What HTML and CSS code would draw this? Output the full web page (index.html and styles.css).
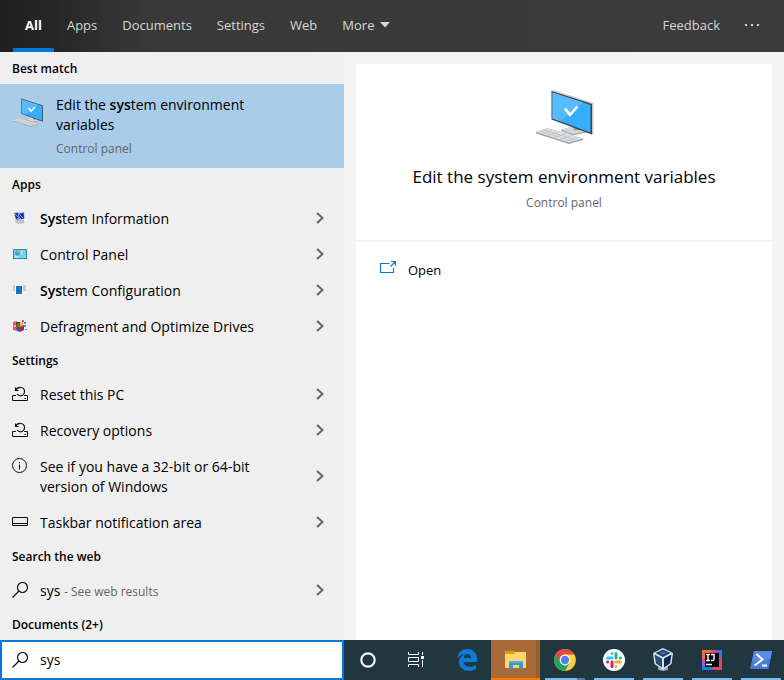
FILE: index.html
```html
<!DOCTYPE html>
<html lang="en">
<head>
<meta charset="utf-8">
<title>Search</title>
<link rel="stylesheet" href="styles.css">
</head>
<body>
<svg class="defs" aria-hidden="true">
  <symbol id="computer" viewBox="0 0 60 56">
    <path d="M27 39.500 41 36 55 40.500V42L39 45.500 27 41Z" fill="#a9aeb1"/>
    <path d="M27 39.500 41 36 55 40.500 39 44Z" fill="#d5d8da"/>
    <path d="M38 33 47 36V40L40 40.500Z" fill="#9a9fa3"/>
    <path d="M17 1 19 0 59.500 13V44L58 45Z" fill="#c3c7ca"/>
    <path d="M17.500 1 58 14V44.500L17.500 29.500Z" fill="#3d454b"/>
    <path d="M18.500 2.500 56.500 15V42.500L18.500 28.500Z" fill="#35aefb"/>
    <path d="M18.500 2.500 49 12.500 26 31 18.500 28.500Z" fill="#58bcfc"/>
    <path d="M31 18.500 36 25 43.500 16.500" fill="none" stroke="#fff" stroke-width="2.600"/>
    <path d="M2 42 13 38 49 48.500V50L35 54 2 43.500Z" fill="#9fa3a7"/>
    <path d="M2 42 13 38 49 48.500 35 52.500Z" fill="#dedfe1"/>
    <path d="M6 41 39 51.500M9.500 39.800 43 50.300M8 43.500 18 40M14 45.500 25 42M20 47.500 31 44M26 49.500 37 46M32 51.500 43 47.500" stroke="#b9bcbf" stroke-width=".7" fill="none"/>
  </symbol>
  <symbol id="chevron" viewBox="0 0 8 12"><path d="M1 1 6.500 6 1 11" fill="none" stroke="#666" stroke-width="2"/></symbol>
  <symbol id="recovery" viewBox="0 0 16 16">
    <path d="M4 9.500H.5V14.500H15.500V9.500H12M12.500 12.500H14" fill="none" stroke="#111"/>
    <path d="M3.500 1.500V4.500H6.500M3.500 4.500C5.500 .3 12.500 .3 12.500 5.500 12.500 8 10.500 9.800 8.500 9.800 7 9.800 6 9.300 5 8.200" fill="none" stroke="#111" stroke-width="1.200"/>
  </symbol>
  <symbol id="search" viewBox="0 0 16 16"><circle cx="10.500" cy="5.500" r="5" fill="none" stroke="#111" stroke-width="1.200"/><path d="M7 9 .5 15.500" stroke="#111" stroke-width="1.200"/></symbol>
</svg>

<header class="topbar">
  <nav class="tabs" aria-label="Search scope">
    <button class="tab tab-active">All</button>
    <button class="tab">Apps</button>
    <button class="tab">Documents</button>
    <button class="tab">Settings</button>
    <button class="tab">Web</button>
    <button class="tab tab-more">More <svg width="10" height="6" viewBox="0 0 10 6"><path d="M0 0H10L5 5.500Z" fill="#d6d6d6"/></svg></button>
  </nav>
  <button class="tab">Feedback</button>
  <button class="tab dots" aria-label="Options"><svg width="16" height="4" viewBox="0 0 16 4"><path d="M1 1H3V3H1ZM7 1H9V3H7ZM13 1H15V3H13Z" fill="#d6d6d6"/></svg></button>
</header>

<main class="content">
  <section class="results">
    <h2 class="group">Best match</h2>
    <a class="best" href="#">
      <svg class="best-icon"><use href="#computer"/></svg>
      <span class="best-text">
        <span class="best-title">Edit the <b>sys</b>tem environment variables</span>
        <span class="sub">Control panel</span>
      </span>
    </a>

    <h2 class="group">Apps</h2>
    <a class="row" href="#">
      <svg class="icon" viewBox="0 0 16 16"><path d="M4 9 12 10V12L13 13 6 14 3 12Z" fill="#bfc3c6"/><path d="M2 3 5 2 7 3 12 2 12.500 9 4 10Z" fill="#8d98ce"/><path d="M2.500 3.500 6 3 6.500 8 4 9ZM7 4 11.500 3 12 8.500 7.500 9Z" fill="#1028ad"/><path d="M3 4 9 9M7 4 11 8" stroke="#94a9f2" fill="none"/></svg>
      <span class="label"><b>Sys</b>tem Information</span><svg class="chevron"><use href="#chevron"/></svg>
    </a>
    <a class="row" href="#">
      <svg class="icon" viewBox="0 0 16 16"><path d="M1 3H15V13H1Z" fill="#258fbd"/><path d="M2 4H14V12H2Z" fill="#79d4fa"/><circle cx="5.500" cy="7" r="2.500" fill="#39a4e2"/><path d="M5.500 4.500A2.500 2.500 0 0 1 8 7H5.500Z" fill="#f1a23c"/><path d="M9 6H11M9 8H10M3 11H7" stroke="#d6f4ff"/><path d="M12 5V7M9 10H12" stroke="#e7a653"/></svg>
      <span class="label">Control Panel</span><svg class="chevron"><use href="#chevron"/></svg>
    </a>
    <a class="row" href="#">
      <svg class="icon" viewBox="0 0 16 16"><path d="M1 3H15V13H1Z" fill="#f4f4f4"/><path d="M1 3H3V9H1ZM11 3H14V9H11Z" fill="#c9cacb"/><path d="M3 3H11V13H3Z" fill="#fff"/><path d="M4 4H10V12H4Z" fill="#0878d3"/></svg>
      <span class="label"><b>Sys</b>tem Configuration</span><svg class="chevron"><use href="#chevron"/></svg>
    </a>
    <a class="row" href="#">
      <svg class="icon" viewBox="0 0 16 16"><path d="M1 4 5 3 6 13 1 12Z" fill="#e95c61"/><path d="M4 4H8V9H4Z" fill="#863a34"/><path d="M5 6 8 5V10L5 11Z" fill="#19a147"/><path d="M8 4H11V9H8Z" fill="#e3b938"/><path d="M4 10 8 9V14L5 13Z" fill="#3358bd"/><path d="M8 9 12 7V12L8 14Z" fill="#b82046"/><path d="M10 2H12V4H10ZM12 4H14V6H12Z" fill="#cc47e6"/><path d="M12 7H14V9H12ZM13 11H15V12H13Z" fill="#35a3d2"/><path d="M2 7H4V9H2Z" fill="#f7abad"/></svg>
      <span class="label">Defragment and Optimize Drives</span><svg class="chevron"><use href="#chevron"/></svg>
    </a>

    <h2 class="group">Settings</h2>
    <a class="row" href="#"><svg class="icon"><use href="#recovery"/></svg><span class="label">Reset this PC</span><svg class="chevron"><use href="#chevron"/></svg></a>
    <a class="row" href="#"><svg class="icon"><use href="#recovery"/></svg><span class="label">Recovery options</span><svg class="chevron"><use href="#chevron"/></svg></a>
    <a class="row" href="#">
      <svg class="icon" viewBox="0 0 16 16"><circle cx="7.500" cy="7.500" r="7" fill="none" stroke="#111"/><path d="M7.500 6.500V11.500M7.500 4V5.200" stroke="#111"/></svg>
      <span class="label">See if you have a 32-bit or 64-bit version of Windows</span><svg class="chevron"><use href="#chevron"/></svg>
    </a>
    <a class="row" href="#">
      <svg class="icon" viewBox="0 0 16 16"><path d="M.5 3.500H15.500V11.500H.5ZM.5 9.500H15.500" fill="none" stroke="#111"/></svg>
      <span class="label">Taskbar notification area</span><svg class="chevron"><use href="#chevron"/></svg>
    </a>

    <h2 class="group">Search the web</h2>
    <a class="row" href="#"><svg class="icon"><use href="#search"/></svg><span class="label">sys <span class="sub">- See web results</span></span><svg class="chevron"><use href="#chevron"/></svg></a>

    <h2 class="group">Documents (2+)</h2>
  </section>

  <section class="preview">
    <div class="card">
      <div class="hero">
        <svg class="hero-icon"><use href="#computer"/></svg>
        <h1 class="hero-title">Edit the system environment variables</h1>
        <p class="sub">Control panel</p>
      </div>
      <a class="action" href="#">
        <svg class="icon" viewBox="0 0 16 16"><path d="M9.500 3.500H.5V12.500H13.500V8M11 1.500H15.500V6M15.500 1.500 10.500 6.500" fill="none" stroke="#0078d7" stroke-width="1.200"/></svg>
        Open
      </a>
    </div>
  </section>
</main>

<footer class="bottom">
  <label class="searchbox">
    <svg class="icon"><use href="#search"/></svg>
    <input class="query" type="text" value="sys" aria-label="Search">
  </label>
  <nav class="taskbar" aria-label="Taskbar">
    <button class="system" aria-label="Cortana"><svg width="24" height="24" viewBox="0 0 24 24"><circle cx="12" cy="12" r="6.700" fill="none" stroke="#f5f5f5" stroke-width="2.200"/></svg></button>
    <button class="system" aria-label="Task view"><svg width="24" height="24" viewBox="0 0 24 24"><path d="M4.500 4V6.500H14.500V4M4.500 19V16.500H14.500V19M4.500 9.500H14.500V13.500H4.500ZM18.500 4V7M18.500 12V19" fill="none" stroke="#fff"/><path d="M17 8H20V11H17Z" fill="#fff"/></svg></button>
    <span class="apps">
      <button class="app" aria-label="Edge"><svg width="24" height="24" viewBox="0 0 24 24"><path d="M2 11C3 4 7 1 12.500 1 18.500 1 22 5.500 22 11V14H8.500C9 17.500 12 18.800 15 18.800 17.500 18.800 19.500 18 21 17V21C19 22.200 16.800 22.800 14 22.800 7.800 22.800 4 19 4 14 4 10.500 6 7.500 9.500 6 6 6.300 3.500 8.500 2 11ZM8.700 10H16C16 7.500 14.700 6 12.500 6 10.500 6 9 7.700 8.700 10Z" fill="#087bdc"/></svg></button>
      <button class="app app-current" aria-label="File Explorer"><svg width="24" height="24" viewBox="0 0 24 24"><path d="M1 3H10L11 4H22V20H1Z" fill="#ffd76b"/><path d="M1 3H10L11 4 10 6H1Z" fill="#dd9b05"/><path d="M5 13H19V21H15V17H9V21H5Z" fill="#3595dc"/><path d="M5 13H19V15H5Z" fill="#58acdf"/></svg></button>
      <button class="app app-open app-stacked" aria-label="Chrome"><svg width="24" height="24" viewBox="0 0 24 24"><circle cx="12" cy="12" r="10.800" fill="#ffcf43"/><path d="M12 12 2.600 6.600A10.800 10.800 0 0 0 12 22.800L16.700 14.700Z" fill="#22a565"/><path d="M2.600 6.600A10.800 10.800 0 0 1 21.400 6.600H12A5.400 5.400 0 0 0 7.300 14.700Z" fill="#e64a3e"/><circle cx="12" cy="12" r="5.400" fill="#fff"/><circle cx="12" cy="12" r="4.200" fill="#4a86e8"/></svg></button>
      <button class="app app-open" aria-label="Slack"><svg width="24" height="24" viewBox="0 0 24 24"><circle cx="12" cy="12" r="11" fill="#fff"/><g fill="none" stroke-width="3" stroke-linecap="round"><path d="M10 5.500V5.600M5.500 10H10" stroke="#36c5f0"/><path d="M14 5.500V10M18.500 10H18.400" stroke="#2eb67d"/><path d="M14 14H18.500M14 18.500V18.400" stroke="#ecb22e"/><path d="M10 14V18.500M5.500 14H5.600" stroke="#e01e5a"/></g></svg></button>
      <button class="app app-open" aria-label="VirtualBox"><svg width="24" height="24" viewBox="0 0 24 24"><path d="M7 19 12 17 17 19V22L12 23 7 22Z" fill="#8fa5b9"/><path d="M12 0 22 5 20.500 16 12 22 3.500 16 2 5Z" fill="#d9e2eb"/><path d="M12 1.500 19.500 5 12 9 4.500 5Z" fill="#183c68"/><path d="M3.500 6.500 11 10.500V19.500L5 15.500Z" fill="#244d79"/><path d="M20.500 6.500 13 10.500V19.500L19 15.500Z" fill="#0e2c51"/><path d="M8 5 12 3 16 5 12 7Z" fill="#49698c"/></svg></button>
      <button class="app app-open" aria-label="IntelliJ IDEA"><svg width="24" height="24" viewBox="0 0 24 24"><path d="M2 2H22V22H2Z" fill="#ee3e62"/><path d="M2 2H14L7 8 2 14Z" fill="#f36a3d"/><path d="M2 10 7 14V22H2Z" fill="#b357d8"/><path d="M2 17 10 18H14L12 22H2Z" fill="#217bed"/><path d="M16 2H22V9L18 10Z" fill="#3d6fe8"/><path d="M5 5H19V19H5Z" fill="#080609"/><path d="M6 6.500H10M8 6.500V12.500M6 12.500H10M11 6.500H14V11Q14 12.500 12.500 12.500H11M6 16.500H12" stroke="#fff" stroke-width="1.400" fill="none"/></svg></button>
      <button class="app app-open" aria-label="PowerShell"><svg width="24" height="24" viewBox="0 0 24 24"><path d="M5 3H23L19.500 21H1Z" fill="#477bd5"/><path d="M5 3H23L21.500 11 3 14Z" fill="#5a8be1"/><path d="M7.500 6 13.500 11.500 5.500 17.500M13 17.500H18" fill="none" stroke="#fff" stroke-width="2"/></svg></button>
    </span>
  </nav>
</footer>
</body>
</html>
```
FILE: styles.css
```css
* { box-sizing: border-box; }

body {
  margin: 0;
  min-height: 100vh;
  display: flex;
  flex-direction: column;
  background: #f4f4f4;
  color: #000;
  font: 14px/20px "Open Sans", "Noto Sans", sans-serif;
}

a { color: inherit; text-decoration: none; }
b { font-weight: 600; }
button { border: 0; padding: 0; background: none; font: inherit; color: inherit; }
svg { flex: none; display: block; }
.defs { width: 0; height: 0; position: absolute; }
.icon { width: 16px; height: 16px; }
.sub { margin: 0; color: #666; font-size: 12px; }

/* Scope tabs */
.topbar {
  display: flex;
  flex: none;
  height: 52px;
  padding: 0 12px 0 13px;
  background: linear-gradient(90deg, #202020, #252525 50px, #393939 150px, #3b3b3b);
  color: #d6d6d6;
}
.tabs { flex: 1; display: flex; gap: 1px; }
.tab { padding: 0 12px 2px; font-size: 13px; border: solid transparent; border-width: 4px 0; }
.tab-active { font-weight: 700; color: #fff; border-bottom-color: #0078d7; }
.tab-more { display: flex; align-items: center; gap: 6px; }

/* Result list */
.content { flex: 1; display: flex; }
.results { width: 344px; background: #efefef; }
.group { margin: 0; padding: 7px 12px 5px; font-size: 12px; font-weight: 600; line-height: 20px; }
.best { display: flex; gap: 12px; padding: 11px 12px 9px; background: #a9cce9; }
.best-icon { width: 32px; height: 30px; margin-top: 3px; }
.best-text { display: flex; flex-direction: column; max-width: 220px; }
.best-text .sub { margin-top: 4px; }
.row { display: flex; gap: 12px; padding: 9px 20px 7px 12px; }
.row .icon { margin-top: 1px; }
.label { flex: 1; padding-right: 32px; }
.label .sub { line-height: 16px; }
.chevron { width: 8px; height: 12px; align-self: center; margin-bottom: 2px; }

/* Preview pane */
.preview { flex: 1; display: flex; padding: 12px 12px 0; }
.card { flex: 1; background: #fff; }
.hero { display: flex; flex-direction: column; align-items: center; padding: 26px 12px 27px; border-bottom: 2px solid #f2f2f2; }
.hero-icon { width: 60px; height: 56px; }
.hero-title { margin: 19px 0 4px; font-size: 17px; font-weight: 400; line-height: 24px; }
.action { display: flex; gap: 12px; padding: 18px 24px; font-size: 13px; }

/* Search box and taskbar */
.bottom { display: flex; flex: none; height: 40px; }
.searchbox { width: 344px; display: flex; align-items: center; gap: 12px; padding: 0 10px; border: 2px solid #0078d7; background: #fff; }
.query { flex: 1; min-width: 0; border: 0; padding: 0; outline: 0; font: inherit; background: none; }
.taskbar { flex: 1; min-width: 0; display: flex; overflow: hidden; background: #20373f; }
.system { flex: none; width: 48px; display: grid; place-items: center; }
.apps { display: flex; padding-left: 2px; }
.app { flex: none; width: 49px; display: grid; place-items: center; }
.app-open { background: linear-gradient(#76b9ed, #76b9ed) center bottom / 40px 2px no-repeat; }
.app-stacked { background: linear-gradient(90deg, #76b9ed 32px, #4b7ca5 32px) center bottom / 40px 2px no-repeat; }
.app-current { background: linear-gradient(#ff7800, #ff7800) center bottom / 100% 2px no-repeat, linear-gradient(90deg, #a86b37 45px, #8b5425 45px, #9b602e 46px); }
```
